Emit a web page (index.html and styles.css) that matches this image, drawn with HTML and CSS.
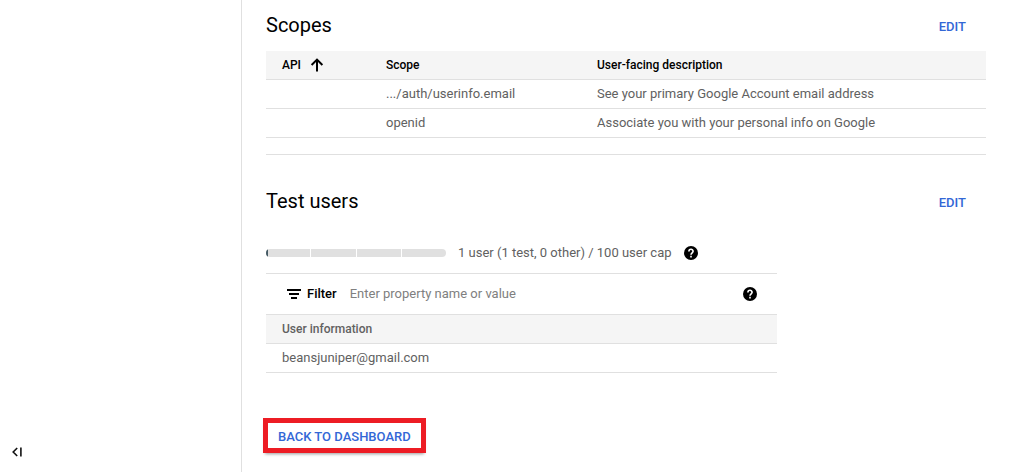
FILE: index.html
```html
<!DOCTYPE html>
<html lang="en">
<head>
<meta charset="utf-8">
<meta name="viewport" content="width=device-width, initial-scale=1">
<title>OAuth consent screen</title>
<link rel="stylesheet" href="styles.css">
</head>
<body>
<div class="layout">
  <aside class="sidebar">
    <button class="collapse" type="button" aria-label="Collapse menu">
      <svg width="10" height="10" viewBox="0 0 10 10"><path d="M5.2 1 1.2 5l4 4M8.900 .5v9" fill="none" stroke="#111" stroke-width="1.600"/></svg>
    </button>
  </aside>
  <main class="main">
    <section class="scopes">
      <div class="section-head">
        <h2 class="title">Scopes</h2>
        <button class="edit" type="button">EDIT</button>
      </div>
      <table class="table scope-table">
        <thead>
          <tr>
            <th class="col-api" scope="col"><span class="sort">API
              <svg width="16" height="16" viewBox="0 0 16 16" aria-hidden="true"><path d="M8 14.500V2.700M2.600 8 8 2.600 13.400 8" fill="none" stroke="#000" stroke-width="2"/></svg></span></th>
            <th class="col-scope" scope="col">Scope</th>
            <th scope="col">User-facing description</th>
          </tr>
        </thead>
        <tbody>
          <tr><td></td><td>.../auth/userinfo.email</td><td>See your primary Google Account email address</td></tr>
          <tr><td></td><td>openid</td><td>Associate you with your personal info on Google</td></tr>
        </tbody>
      </table>
    </section>
    <section class="users">
      <div class="section-head">
        <h2 class="title">Test users</h2>
        <button class="edit" type="button">EDIT</button>
      </div>
      <div class="panel">
        <div class="usage">
          <div class="meter" role="img" aria-label="1 of 100 users">
            <span class="segment used"></span><span class="segment"></span><span class="segment"></span><span class="segment"></span>
          </div>
          <span>1 user (1 test, 0 other) / 100 user cap</span>
          <button class="help" type="button" aria-label="Help">
            <svg width="14" height="14" viewBox="0 0 14 14"><circle cx="7" cy="7" r="7"/><path d="M4.900 5.500C4.900 2.600 9.100 2.600 9.100 5.300 9.100 6.800 7 6.800 7 8.800M7 9.800v1.600" fill="none" stroke="#fff" stroke-width="1.600"/></svg>
          </button>
        </div>
        <div class="filter">
          <svg width="14" height="10" viewBox="0 0 14 10" aria-hidden="true"><path d="M0 0h14v2H0zM2 4h10v2H2zM4 8h6v2H4z"/></svg>
          <label class="filter-label" for="filter">Filter</label>
          <input class="filter-input" id="filter" type="text" placeholder="Enter property name or value">
          <button class="help" type="button" aria-label="Filter help">
            <svg width="14" height="14" viewBox="0 0 14 14"><circle cx="7" cy="7" r="7"/><path d="M4.900 5.500C4.900 2.600 9.100 2.600 9.100 5.300 9.100 6.800 7 6.800 7 8.800M7 9.800v1.600" fill="none" stroke="#fff" stroke-width="1.600"/></svg>
          </button>
        </div>
        <table class="table user-table">
          <thead><tr><th scope="col">User information</th></tr></thead>
          <tbody><tr><td>beansjuniper@gmail.com</td></tr></tbody>
        </table>
      </div>
    </section>
    <button class="back" type="button">BACK TO DASHBOARD</button>
  </main>
</div>
</body>
</html>
```
FILE: styles.css
```css
* {
  box-sizing: border-box;
}

body {
  margin: 0;
  background: #fff;
  color: #616161;
  font: 13px/20px Roboto, "Liberation Sans", sans-serif;
}

button {
  margin: 0;
  padding: 0;
  border: 0;
  background: none;
  font: inherit;
  cursor: pointer;
}

svg {
  display: block;
  flex: none;
}

.layout {
  display: grid;
  grid-template-columns: 242px minmax(0, 1fr);
  min-height: 100vh;
}

.sidebar {
  display: flex;
  align-items: flex-end;
  padding: 0 12px 15px;
  border-right: 1px solid #e0e0e0;
}

.main {
  padding: 10px 26px 16px 24px;
}

.section-head {
  display: flex;
  align-items: center;
  justify-content: space-between;
  height: 30px;
  padding-right: 20px;
}

.title {
  margin: 0;
  color: #000;
  font-size: 20px;
  font-weight: 400;
  line-height: 30px;
}

.edit {
  padding-top: 4px;
  color: #3367d6;
  font-weight: 500;
}

.scopes {
  padding-bottom: 16px;
  border-bottom: 1px solid #e0e0e0;
}

.table {
  width: 100%;
  border-collapse: separate;
  border-spacing: 0;
  table-layout: fixed;
}

.scope-table {
  margin-top: 11px;
}

.table th,
.table td {
  height: 29px;
  padding: 0 0 0 16px;
  border-bottom: 1px solid #e0e0e0;
  text-align: left;
}

.table th {
  background: #f5f5f5;
  color: #000;
  font-size: 12px;
  font-weight: 500;
}

.user-table th {
  color: #616161;
}

.col-api {
  width: 104px;
}

.col-scope {
  width: 211px;
}

.sort {
  display: flex;
  align-items: center;
  gap: 8px;
}

.users {
  padding-top: 31px;
}

.panel {
  max-width: 511px;
}

.usage,
.filter {
  display: flex;
  align-items: center;
  border-bottom: 1px solid #e0e0e0;
}

.usage {
  gap: 12px;
  height: 58px;
  padding-top: 16px;
}

.meter {
  display: flex;
  gap: 1px;
  width: 180px;
  height: 8px;
  border-radius: 4px;
  overflow: hidden;
}

.segment {
  flex: 1;
  background: #e0e0e0;
}

.used {
  box-shadow: inset 2px 0 #455a64;
}

.filter {
  height: 41px;
  padding: 0 20px 0 21px;
}

.filter-label {
  margin: 0 13px 0 6px;
  color: #000;
  font-weight: 500;
}

.filter-input {
  flex: 1;
  min-width: 0;
  padding: 0;
  border: 0;
  outline: 0;
  background: none;
  color: #616161;
  font: inherit;
}

.filter-input::placeholder {
  color: #808080;
}

.back {
  display: block;
  height: 35px;
  margin: 45px 0 0 -3px;
  padding: 2px 10px 0;
  border: 5px solid #ed1c24;
  box-shadow: 0 3px 3px -2px rgba(0, 0, 0, 0.4);
  color: #3367d6;
  font-weight: 500;
}
```
